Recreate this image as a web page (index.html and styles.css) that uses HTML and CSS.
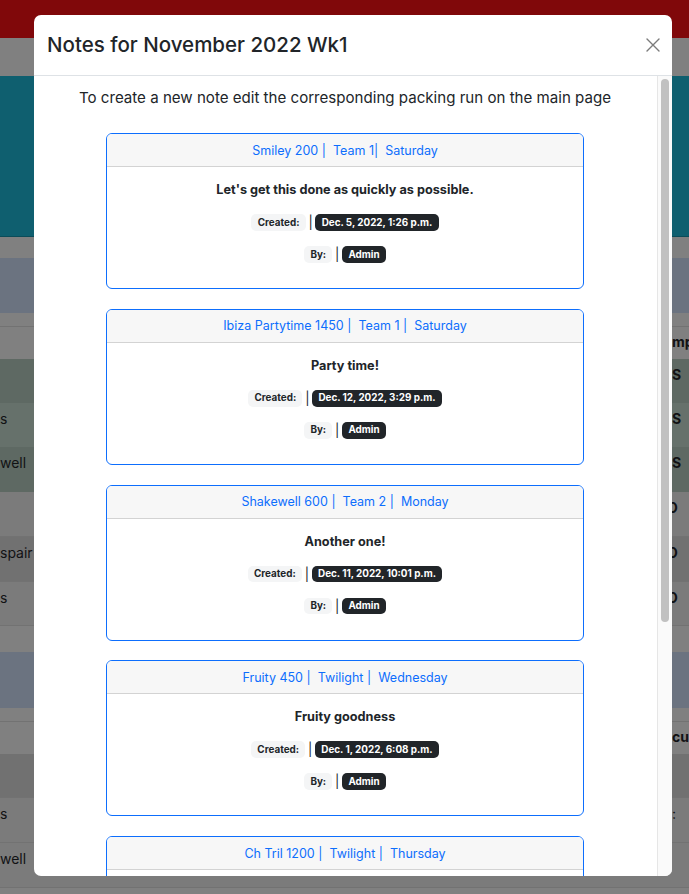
FILE: index.html
```html
<!DOCTYPE html>
<html lang="en">
<head>
<meta charset="utf-8">
<title>Notes for November 2022 Wk1</title>
<link rel="stylesheet" href="styles.css">
</head>
<body>
<div class="page">
  <div class="band band-red"></div>
  <div class="band band-sub"></div>
  <div class="band band-hero"></div>
  <div class="band gap-21"></div>
  <div class="band band-primary h55"></div>
  <div class="band gap-14 lined"></div>
  <div class="trow h32"><span class="lc"></span><span class="rc bold">mp</span></div>
  <div class="trow h44 tone-success-dark"><span class="lc"></span><span class="rc bold">S</span></div>
  <div class="trow h44 tone-success"><span class="lc">s</span><span class="rc bold">S</span></div>
  <div class="trow h45 tone-success-dark"><span class="lc">well</span><span class="rc bold">S</span></div>
  <div class="trow h45 lined"><span class="lc"></span><span class="rc bold peek">O</span></div>
  <div class="trow h45 tone-dark lined"><span class="lc">spair</span><span class="rc bold peek">O</span></div>
  <div class="trow h44 lined"><span class="lc">s</span><span class="rc bold peek">O</span></div>
  <div class="band gap-26"></div>
  <div class="band band-primary h56"></div>
  <div class="band gap-14 lined"></div>
  <div class="trow h32"><span class="lc"></span><span class="rc bold">cul</span></div>
  <div class="trow h44 tone-dark lined"><span class="lc"></span><span class="rc"></span></div>
  <div class="trow h45 lined"><span class="lc">s</span><span class="rc">:</span></div>
  <div class="trow h45 lined"><span class="lc">well</span><span class="rc"></span></div>
  <div class="band gap-14"></div>
</div>

<div class="modal">
  <div class="modal-header">
    <h5 class="modal-title">Notes for November 2022 Wk1</h5>
    <button class="btn-close" aria-label="Close">
      <svg width="14" height="14" viewBox="0 0 14 14"><path d="M1 1 L13 13 M13 1 L1 13" stroke="#7b7b7b" stroke-width="1.4" stroke-linecap="round" fill="none"/></svg>
    </button>
  </div>
  <div class="modal-main">
    <div class="modal-body">
      <p class="intro">To create a new note edit the corresponding packing run on the main page</p>

      <div class="note-card">
        <div class="note-head"><a href="#">Smiley 200</a> |&nbsp; <a href="#">Team 1</a>|&nbsp; <a href="#">Saturday</a></div>
        <div class="note-body">
          <p class="note-text">Let's get this done as quickly as possible.</p>
          <div class="meta"><span class="badge light">Created:</span> | <span class="badge dark">Dec. 5, 2022, 1:26 p.m.</span></div>
          <div class="meta"><span class="badge light">By:</span> | <span class="badge dark">Admin</span></div>
        </div>
      </div>

      <div class="note-card">
        <div class="note-head"><a href="#">Ibiza Partytime 1450</a> |&nbsp; <a href="#">Team 1</a> |&nbsp; <a href="#">Saturday</a></div>
        <div class="note-body">
          <p class="note-text">Party time!</p>
          <div class="meta"><span class="badge light">Created:</span> | <span class="badge dark">Dec. 12, 2022, 3:29 p.m.</span></div>
          <div class="meta"><span class="badge light">By:</span> | <span class="badge dark">Admin</span></div>
        </div>
      </div>

      <div class="note-card">
        <div class="note-head"><a href="#">Shakewell 600</a> |&nbsp; <a href="#">Team 2</a> |&nbsp; <a href="#">Monday</a></div>
        <div class="note-body">
          <p class="note-text">Another one!</p>
          <div class="meta"><span class="badge light">Created:</span> | <span class="badge dark">Dec. 11, 2022, 10:01 p.m.</span></div>
          <div class="meta"><span class="badge light">By:</span> | <span class="badge dark">Admin</span></div>
        </div>
      </div>

      <div class="note-card">
        <div class="note-head"><a href="#">Fruity 450</a> |&nbsp; <a href="#">Twilight</a> |&nbsp; <a href="#">Wednesday</a></div>
        <div class="note-body">
          <p class="note-text">Fruity goodness</p>
          <div class="meta"><span class="badge light">Created:</span> | <span class="badge dark">Dec. 1, 2022, 6:08 p.m.</span></div>
          <div class="meta"><span class="badge light">By:</span> | <span class="badge dark">Admin</span></div>
        </div>
      </div>

      <div class="note-card">
        <div class="note-head"><a href="#">Ch Tril 1200</a> |&nbsp; <a href="#">Twilight</a> |&nbsp; <a href="#">Thursday</a></div>
        <div class="note-body">
          <p class="note-text">Last run of the week.</p>
          <div class="meta"><span class="badge light">Created:</span> | <span class="badge dark">Dec. 2, 2022, 9:14 a.m.</span></div>
          <div class="meta"><span class="badge light">By:</span> | <span class="badge dark">Admin</span></div>
        </div>
      </div>
    </div>
    <div class="scrollbar"><div class="thumb"></div></div>
  </div>
</div>
</body>
</html>
```

FILE: styles.css
```css
* { box-sizing: border-box; }

html, body {
  margin: 0;
  padding: 0;
  height: 100%;
  overflow: hidden;
}

body {
  font-family: Inter, "Noto Sans", sans-serif;
  color: #212529;
  background: #808080;
}

/* ---------- dimmed page behind the modal ---------- */
.page {
  width: 689px;
}

.band { background: #808080; }
.band-red { height: 38px; background: #80080a; }
.band-sub { height: 38px; background: #808080; }
.band-hero { height: 161px; background: #0f5f6f; border-bottom: 1px solid #0b4c59; }
.band-primary { background: #6b7380; }
.gap-21 { height: 21px; }
.gap-14 { height: 14px; }
.gap-26 { height: 26px; }
.h55 { height: 55px; }
.h56 { height: 56px; }
.lined { border-bottom: 1px solid #727272; }

.trow {
  display: flex;
  background: #7b7b7b;
  font-size: 14px;
  line-height: 20px;
  color: #111214;
  padding-top: 6px;
  white-space: nowrap;
}
.h32 { height: 32px; background: #808080; padding-top: 5px; }
.h44 { height: 44px; }
.h45 { height: 45px; }
.tone-success { background: #66716b; }
.tone-success-dark { background: #5e6963; }
.tone-dark { background: #717171; }

.lc {
  flex: 0 0 660px;
  overflow: hidden;
}
.rc {
  flex: 1;
  overflow: hidden;
  padding-left: 12px;
}
.rc.peek { padding-left: 7px; }
.bold { font-weight: 700; }

/* ---------- modal ---------- */
.modal {
  position: absolute;
  top: 15px;
  left: 34px;
  width: 638px;
  height: 861px;
  background: #fff;
  border-radius: 7px;
  overflow: hidden;
  display: flex;
  flex-direction: column;
}

.modal-header {
  flex: 0 0 61px;
  display: flex;
  align-items: center;
  justify-content: space-between;
  padding: 0 12px 0 13px;
  border-bottom: 1px solid #dee2e6;
}

.modal-title {
  margin: 0;
  font-size: 20.5px;
  font-weight: 500;
  line-height: 24px;
  color: #212529;
}

.btn-close {
  border: 0;
  background: transparent;
  padding: 0;
  width: 14px;
  height: 14px;
  display: flex;
}

.modal-main {
  flex: 1;
  min-height: 0;
  display: flex;
}

.modal-body {
  flex: 1;
  overflow: hidden;
  padding: 10px 16px 16px 15px;
  text-align: center;
}

.scrollbar {
  flex: 0 0 15px;
  background: #fafafa;
  border-left: 1px solid #e6e6e6;
  padding: 3px 3px 0 3px;
}
.thumb {
  height: 543px;
  background: #c1c1c1;
  border-radius: 4px;
}

.intro {
  margin: 0 0 23px;
  font-size: 15.1px;
  line-height: 24px;
}

/* ---------- note cards ---------- */
.note-card {
  width: 478px;
  margin: 0 auto 19.75px;
  border: 1px solid #0d6efd;
  border-radius: 6px;
  overflow: hidden;
}

.note-head {
  height: 33px;
  padding-top: 6.5px;
  background: #f7f7f7;
  border-bottom: 1px solid #d3d3d3;
  font-size: 12.5px;
  line-height: 20px;
  color: #0d6efd;
}
.note-head a {
  color: #0d6efd;
  text-decoration: none;
}

.note-body {
  padding: 13px 16px 24px;
}

.note-text {
  margin: 0 0 12px;
  font-size: 12.7px;
  font-weight: 700;
  line-height: 20px;
}

.meta {
  font-size: 13px;
  line-height: 20px;
  margin-bottom: 12px;
  word-spacing: -1px;
  color: #212529;
}
.meta:last-child { margin-bottom: 0; }

.badge {
  display: inline-block;
  vertical-align: middle;
  font-size: 9.9px;
  font-weight: 700;
  line-height: 1;
  padding: 3.4px 6.3px;
  border-radius: 5px;
  word-spacing: 0;
  position: relative;
  top: -1px;
}
.badge.light { background: #f4f5f6; color: #212529; }
.badge.dark { background: #212529; color: #fff; }
```
